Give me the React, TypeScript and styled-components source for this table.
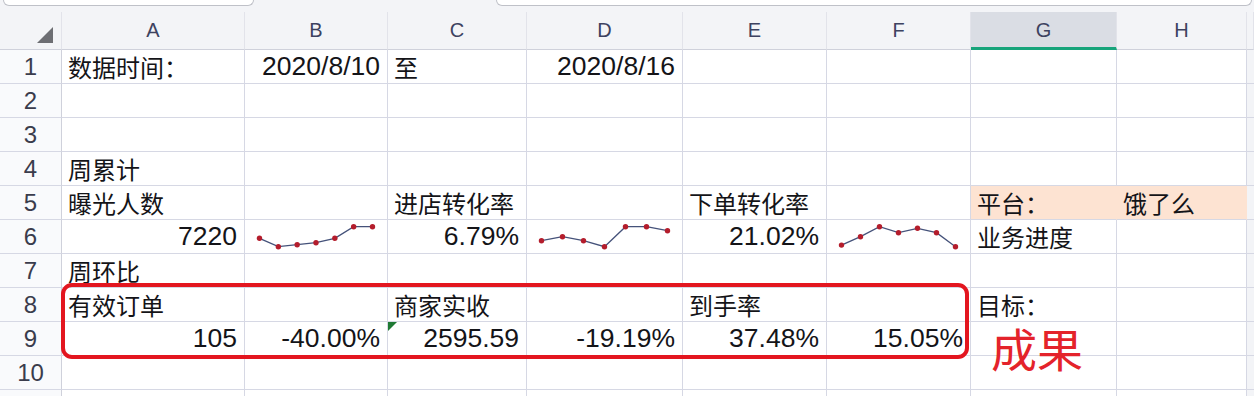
import { Fragment } from "react";
import styled, { createGlobalStyle } from "styled-components";

const GlobalStyle = createGlobalStyle`
  html, body {
    margin: 0;
    padding: 0;
    background: #ffffff;
  }
  body {
    font-family: "Liberation Sans", "Noto Sans CJK SC", sans-serif;
    overflow: hidden;
  }
`;

const LINE = "#d6d8e4";
const COL_WIDTHS = [183, 143, 139, 156, 144, 144, 146, 130];
const LETTERS = ["A", "B", "C", "D", "E", "F", "G", "H"];
const SELECTED_COL = 6;

type CellData = {
  t?: string;
  num?: boolean;
  spark?: number[];
  bg?: string;
  mark?: boolean;
};

const PEACH = "#fde3d2";

const ROWS: CellData[][] = [
  [{ t: "数据时间：" }, { t: "2020/8/10", num: true }, { t: "至" }, { t: "2020/8/16", num: true }, {}, {}, {}, {}],
  [{}, {}, {}, {}, {}, {}, {}, {}],
  [{}, {}, {}, {}, {}, {}, {}, {}],
  [{ t: "周累计" }, {}, {}, {}, {}, {}, {}, {}],
  [
    { t: "曝光人数" },
    {},
    { t: "进店转化率" },
    {},
    { t: "下单转化率" },
    {},
    { t: "平台：", bg: PEACH },
    { t: "饿了么", bg: PEACH },
  ],
  [
    { t: "7220", num: true },
    { spark: [0.42, 0, 0.1, 0.2, 0.42, 1, 1] },
    { t: "6.79%", num: true },
    { spark: [0.3, 0.5, 0.3, 0, 1, 1, 0.8] },
    { t: "21.02%", num: true },
    { spark: [0.08, 0.5, 1, 0.7, 0.92, 0.7, 0] },
    { t: "业务进度" },
    {},
  ],
  [{ t: "周环比" }, {}, {}, {}, {}, {}, {}, {}],
  [{ t: "有效订单" }, {}, { t: "商家实收" }, {}, { t: "到手率" }, {}, { t: "目标：" }, {}],
  [
    { t: "105", num: true },
    { t: "-40.00%", num: true },
    { t: "2595.59", num: true, mark: true },
    { t: "-19.19%", num: true },
    { t: "37.48%", num: true },
    { t: "15.05%", num: true },
    {},
    {},
  ],
  [{}, {}, {}, {}, {}, {}, {}, {}],
  [{ t: "结论分析" }, {}, {}, {}, {}, {}, {}, {}],
];

const Page = styled.div`
  width: 1254px;
  height: 396px;
  overflow: hidden;
  background: #f3f4f7;
`;

const TopBar = styled.div`
  display: flex;
  height: 12px;
  padding-left: 3px;
  gap: 242px;
`;

const FieldEdge = styled.div<{ $w: number }>`
  width: ${(p) => p.$w}px;
  height: 6px;
  box-sizing: border-box;
  background: #ffffff;
  border: 1px solid #bfc1c8;
  border-top: none;
  border-radius: 0 0 8px 8px;
`;

const Sheet = styled.div`
  position: relative;
  display: grid;
  grid-template-columns: 62px ${COL_WIDTHS.map((w) => `${w}px`).join(" ")} 7px;
  grid-template-rows: 38px repeat(11, 34px);
  background: #ffffff;
`;

const Corner = styled.div`
  position: relative;
  box-sizing: border-box;
  background: #f3f4f7;
  border-right: 1px solid #e2e3ea;
  border-bottom: 1px solid #cfd1db;
`;

const CornerTriangle = styled.div`
  position: absolute;
  left: 37px;
  top: 15px;
  width: 0;
  height: 0;
  border-left: 16px solid transparent;
  border-bottom: 16px solid #6d6e73;
`;

const ColHead = styled.div<{ $selected?: boolean }>`
  box-sizing: border-box;
  display: flex;
  align-items: center;
  justify-content: center;
  background: ${(p) => (p.$selected ? "#dadde4" : "#f3f4f7")};
  border-right: 1px solid #e2e3ea;
  border-bottom: ${(p) => (p.$selected ? "3px solid #17a47b" : "1px solid #cfd1db")};
  padding-top: ${(p) => (p.$selected ? "2px" : "0")};
  color: #3d4260;
  font-size: 20px;
`;

const RowHead = styled.div`
  box-sizing: border-box;
  display: flex;
  align-items: center;
  justify-content: center;
  background: #f9fafc;
  border-right: 1px solid #cfd1db;
  border-bottom: 1px solid ${LINE};
  color: #3a3c4c;
  font-size: 24px;
`;

const Cell = styled.div<{ $num?: boolean; $bg?: string }>`
  position: relative;
  box-sizing: border-box;
  display: flex;
  align-items: center;
  justify-content: ${(p) => (p.$num ? "flex-end" : "flex-start")};
  padding: 0 7px 0 6px;
  background: ${(p) => p.$bg ?? "#ffffff"};
  border-right: 1px solid ${(p) => p.$bg ?? LINE};
  border-bottom: 1px solid ${LINE};
  color: #141418;
  font-size: ${(p) => (p.$num ? "26.5px" : "24px")};
  white-space: nowrap;
`;

const Filler = styled.div`
  box-sizing: border-box;
  background: #f3f4f7;
  border-bottom: 1px solid ${LINE};
`;

const CommentMark = styled.div`
  position: absolute;
  left: 0;
  top: 0;
  width: 0;
  height: 0;
  border-top: 9px solid #1f7a34;
  border-right: 9px solid transparent;
`;

const Highlight = styled.div`
  position: absolute;
  left: 61px;
  top: 271px;
  width: 908px;
  height: 76px;
  box-sizing: border-box;
  border: 4.5px solid #e3161f;
  border-radius: 11px;
  pointer-events: none;
`;

const Note = styled.div`
  position: absolute;
  left: 991px;
  top: 315px;
  color: #e4232b;
  font-family: "Noto Sans CJK SC", sans-serif;
  font-size: 46px;
  line-height: 40px;
`;

const Sparkline = ({ width, data }: { width: number; data: number[] }) => {
  const pad = 14.5;
  const step = (width - 1 - pad * 2) / (data.length - 1);
  const pts = data.map((v, i) => [pad + i * step, 6.7 + (1 - v) * 20]);
  return (
    <svg width={width - 1} height={33} style={{ position: "absolute", left: 0, top: 0 }}>
      <polyline
        points={pts.map((p) => p.join(",")).join(" ")}
        fill="none"
        stroke="#45527a"
        strokeWidth={1.3}
      />
      {pts.map(([x, y], i) => (
        <circle key={i} cx={x} cy={y} r={2.7} fill="#b41d2c" />
      ))}
    </svg>
  );
};

export default function App() {
  return (
    <Page>
      <GlobalStyle />
      <TopBar>
        <FieldEdge $w={251} />
        <FieldEdge $w={756} />
      </TopBar>
      <Sheet>
        <Corner>
          <CornerTriangle />
        </Corner>
        {LETTERS.map((l, i) => (
          <ColHead key={l} $selected={i === SELECTED_COL}>
            {l}
          </ColHead>
        ))}
        <ColHead />
        {ROWS.map((row, r) => (
          <Fragment key={r}>
            <RowHead>{r + 1}</RowHead>
            {row.map((c, i) => (
              <Cell key={i} $num={c.num} $bg={c.bg}>
                {c.mark && <CommentMark />}
                {c.spark && <Sparkline width={COL_WIDTHS[i]} data={c.spark} />}
                {c.t}
              </Cell>
            ))}
            <Filler />
          </Fragment>
        ))}
        <Highlight />
        <Note>成果</Note>
      </Sheet>
    </Page>
  );
}
